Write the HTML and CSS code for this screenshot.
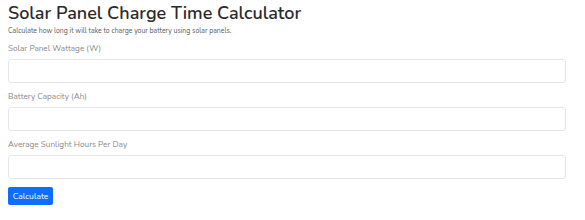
FILE: index.html
```html
<!DOCTYPE html>
<html lang="en">
<head>
    <meta charset="UTF-8">
    <meta name="viewport" content="width=device-width, initial-scale=1.0">
    <title>Solar Panel Charge Time Calculator</title>
    <link rel="stylesheet" href="styles.css">
</head>
<body>

<div class="calc">
    <h1 class="calc-title">Solar Panel Charge Time Calculator</h1>
    <p class="calc-desc">Calculate how long it will take to charge your battery using solar panels.</p>

    <div class="field">
        <label for="watt">Solar Panel Wattage (W)</label>
        <input type="number" id="watt">
    </div>
    <div class="field">
        <label for="cap">Battery Capacity (Ah)</label>
        <input type="number" id="cap">
    </div>
    <div class="field">
        <label for="sun">Average Sunlight Hours Per Day</label>
        <input type="number" id="sun">
    </div>

    <button class="btn-calc">Calculate</button>
</div>

</body>
</html>
```

FILE: styles.css
```css
* {margin:0;padding:0;box-sizing:border-box;}
body {
    margin: 0 8px;
    padding-top: 2px;
    font-family: "Nunito", "Lato", "Noto Sans", sans-serif;
    color: #2b2b2b;
    background: #fff;
}
.calc {
    width: 558px;
}
.calc-title {
    font-size: 18px;
    font-weight: 600;
    line-height: 22px;
}
.calc-desc {
    font-size: 6.9px;
    color: #5a5a5a;
    margin-top: 2px;
    line-height: 10px;
}
.field {
    margin-top: 7px;
}
.field label {
    display: block;
    font-size: 8.2px;
    color: #8a8a8a;
    line-height: 12px;
    margin-bottom: 4px;
}
.field input {
    display: block;
    width: 100%;
    height: 24px;
    border: 1px solid #e6e6e6;
    border-radius: 3px;
    outline: none;
}
.field + .field {
    margin-top: 8px;
}
.btn-calc {
    margin-top: 8px;
    width: 45px;
    height: 18px;
    border: 0;
    border-radius: 2px;
    background: #0d6efd;
    color: #fff;
    font-family: inherit;
    font-size: 8.5px;
    cursor: pointer;
}
```
